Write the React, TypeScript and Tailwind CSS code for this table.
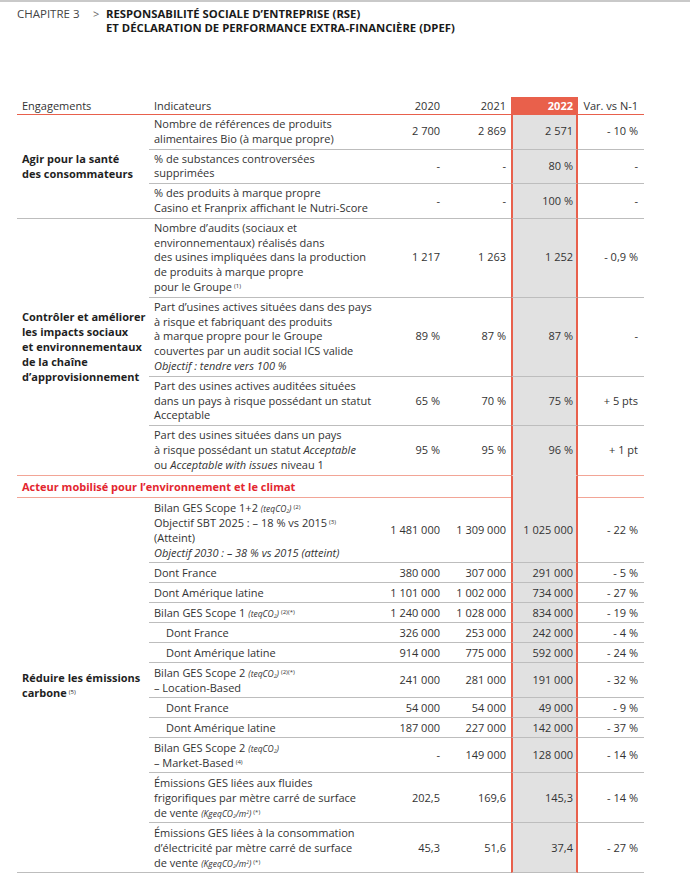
import React from 'react';

type Cell = React.ReactNode;

interface Row {
  lines: Cell[];
  v2020: string;
  v2021: string;
  v2022: string;
  varN: string;
  indent?: boolean;
}

interface Group {
  label: Cell[];
  rows: Row[];
  endBorder: string;
  leading: string;
}

const Sup = ({ children }: { children: React.ReactNode }) => (
  <sup className="ml-[2px] text-[6px] font-normal not-italic leading-none">{children}</sup>
);

const Teq = () => (
  <span className="text-[8.5px] italic leading-none">
    (teqCO<sub className="text-[5px] leading-none">2</sub>)
  </span>
);

const Kg = () => (
  <span className="text-[8.5px] italic leading-none">
    (KgeqCO<sub className="text-[5px] leading-none">2</sub>/m<sup className="text-[5px] leading-none">2</sup>)
  </span>
);

const GROUPS: Group[] = [
  {
    label: ['Agir pour la santé', 'des consommateurs'],
    endBorder: 'border-[#bdbdbd]',
    leading: 'leading-[14.8px]',
    rows: [
      { lines: ['Nombre de références de produits', 'alimentaires Bio (à marque propre)'], v2020: '2 700', v2021: '2 869', v2022: '2 571', varN: '- 10 %' },
      { lines: ['% de substances controversées', 'supprimées'], v2020: '-', v2021: '-', v2022: '80 %', varN: '-' },
      { lines: ['% des produits à marque propre', 'Casino et Franprix affichant le Nutri-Score'], v2020: '-', v2021: '-', v2022: '100 %', varN: '-' },
    ],
  },
  {
    label: ['Contrôler et améliorer', 'les impacts sociaux', 'et environnementaux', 'de la chaîne', 'd’approvisionnement'],
    endBorder: 'border-[#f2a596]',
    leading: 'leading-[14.8px]',
    rows: [
      {
        lines: [
          'Nombre d’audits (sociaux et',
          'environnementaux) réalisés dans',
          'des usines impliquées dans la production',
          'de produits à marque propre',
          <>pour le Groupe<Sup>(1)</Sup></>,
        ],
        v2020: '1 217', v2021: '1 263', v2022: '1 252', varN: '- 0,9 %',
      },
      {
        lines: [
          'Part d’usines actives situées dans des pays',
          'à risque et fabriquant des produits',
          'à marque propre pour le Groupe',
          'couvertes par un audit social ICS valide',
          <i>Objectif : tendre vers 100 %</i>,
        ],
        v2020: '89 %', v2021: '87 %', v2022: '87 %', varN: '-',
      },
      {
        lines: ['Part des usines actives auditées situées', 'dans un pays à risque possédant un statut', 'Acceptable'],
        v2020: '65 %', v2021: '70 %', v2022: '75 %', varN: '+ 5 pts',
      },
      {
        lines: [
          'Part des usines situées dans un pays',
          <>à risque possédant un statut <i>Acceptable</i></>,
          <>ou <i>Acceptable with issues</i> niveau 1</>,
        ],
        v2020: '95 %', v2021: '95 %', v2022: '96 %', varN: '+ 1 pt',
      },
    ],
  },
];

const CARBON: Group = {
  label: [<>Réduire les émissions</>, <>carbone<Sup>(5)</Sup></>],
  endBorder: 'border-[#bdbdbd]',
  leading: 'leading-[15px]',
  rows: [
    {
      lines: [
        <>Bilan GES Scope 1+2 <Teq /><Sup>(2)</Sup></>,
        <>Objectif SBT 2025 : – 18 % vs 2015<Sup>(3)</Sup></>,
        '(Atteint)',
        <i>Objectif 2030 : – 38 % vs 2015 (atteint)</i>,
      ],
      v2020: '1 481 000', v2021: '1 309 000', v2022: '1 025 000', varN: '- 22 %',
    },
    { lines: ['Dont France'], v2020: '380 000', v2021: '307 000', v2022: '291 000', varN: '- 5 %' },
    { lines: ['Dont Amérique latine'], v2020: '1 101 000', v2021: '1 002 000', v2022: '734 000', varN: '- 27 %' },
    { lines: [<>Bilan GES Scope 1 <Teq /><Sup>(2)(*)</Sup></>], v2020: '1 240 000', v2021: '1 028 000', v2022: '834 000', varN: '- 19 %' },
    { lines: ['Dont France'], v2020: '326 000', v2021: '253 000', v2022: '242 000', varN: '- 4 %', indent: true },
    { lines: ['Dont Amérique latine'], v2020: '914 000', v2021: '775 000', v2022: '592 000', varN: '- 24 %', indent: true },
    { lines: [<>Bilan GES Scope 2 <Teq /><Sup>(2)(*)</Sup></>, '– Location-Based'], v2020: '241 000', v2021: '281 000', v2022: '191 000', varN: '- 32 %' },
    { lines: ['Dont France'], v2020: '54 000', v2021: '54 000', v2022: '49 000', varN: '- 9 %', indent: true },
    { lines: ['Dont Amérique latine'], v2020: '187 000', v2021: '227 000', v2022: '142 000', varN: '- 37 %', indent: true },
    { lines: [<>Bilan GES Scope 2 <Teq /></>, <>– Market-Based<Sup>(4)</Sup></>], v2020: '-', v2021: '149 000', v2022: '128 000', varN: '- 14 %' },
    {
      lines: ['Émissions GES liées aux fluides', 'frigorifiques par mètre carré de surface', <>de vente <Kg /><Sup>(*)</Sup></>],
      v2020: '202,5', v2021: '169,6', v2022: '145,3', varN: '- 14 %',
    },
    {
      lines: ['Émissions GES liées à la consommation', 'd’électricité par mètre carré de surface', <>de vente <Kg /><Sup>(*)</Sup></>],
      v2020: '45,3', v2021: '51,6', v2022: '37,4', varN: '- 27 %',
    },
  ],
};

const numCls = 'whitespace-nowrap border-b text-right align-middle';
const hiCls = 'whitespace-nowrap border-x-2 border-x-[#e8604c] bg-[#e1e1e1] text-right align-middle';

function DataRows({ group }: { group: Group }) {
  return (
    <>
      {group.rows.map((row, i) => {
        const last = i === group.rows.length - 1;
        const b = last ? group.endBorder : 'border-[#bdbdbd]';
        return (
          <tr key={i} className={group.leading}>
            {i === 0 && (
              <td
                rowSpan={group.rows.length}
                className={`whitespace-nowrap border-b pl-[5px] align-middle font-bold leading-[15px] text-[#1f1f1f] ${group.endBorder}`}
              >
                {group.label.map((l, k) => (
                  <div key={k}>{l}</div>
                ))}
              </td>
            )}
            <td className={`whitespace-nowrap border-b py-[2px] pr-1 ${row.indent ? 'pl-[17px]' : 'pl-[5px]'} ${b}`}>
              {row.lines.map((l, k) => (
                <div key={k}>{l}</div>
              ))}
            </td>
            <td className={`${numCls} pr-[5px] ${b}`}>{row.v2020}</td>
            <td className={`${numCls} pr-[5px] ${b}`}>{row.v2021}</td>
            <td className={`${hiCls} border-b pr-[3px] ${last && group.endBorder.includes('f2a') ? 'border-b-transparent' : 'border-b-[#bdbdbd]'}`}>
              {row.v2022}
            </td>
            <td className={`${numCls} pr-[6px] ${b}`}>{row.varN}</td>
          </tr>
        );
      })}
    </>
  );
}

export default function App() {
  return (
    <div
      className="min-h-[895px] w-[690px] bg-white text-[#333]"
      style={{ fontFamily: '"Open Sans", "Liberation Sans", sans-serif' }}
    >
      <div className="h-[2px] bg-[#c9c9c9]" />
      <div className="flex pl-[17px] pt-[5px] leading-[14px]">
        <span className="w-[76px] text-[11.5px] text-[#444]">CHAPITRE 3</span>
        <span className="w-[13px] text-[11px] text-[#666]">&gt;</span>
        <div className="text-[11.3px] font-bold text-[#1a1a1a]">
          <div>RESPONSABILITÉ SOCIALE D’ENTREPRISE (RSE)</div>
          <div>ET DÉCLARATION DE PERFORMANCE EXTRA-FINANCIÈRE (DPEF)</div>
        </div>
      </div>

      <table className="ml-[17px] mt-[62px] w-[627px] table-fixed border-separate border-spacing-0 text-[11px] leading-[15px]">
        <colgroup>
          <col className="w-[132px]" />
          <col className="w-[230px]" />
          <col className="w-[66px]" />
          <col className="w-[66px]" />
          <col className="w-[67px]" />
          <col className="w-[66px]" />
        </colgroup>
        <thead>
          <tr className="text-[#333]">
            <th className="border-b border-[#e8604c] py-[1px] pl-[5px] text-left font-normal">Engagements</th>
            <th className="border-b border-[#e8604c] pl-[5px] text-left font-normal">Indicateurs</th>
            <th className="border-b border-[#e8604c] pr-[5px] text-right font-normal">2020</th>
            <th className="border-b border-[#e8604c] pr-[5px] text-right font-normal">2021</th>
            <th className="border-b border-x-2 border-[#e8604c] bg-[#e9604b] pr-[3px] text-right font-bold text-white">2022</th>
            <th className="whitespace-nowrap border-b border-[#e8604c] pr-[6px] text-right font-normal">Var. vs N-1</th>
          </tr>
        </thead>
        <tbody>
          {GROUPS.map((g, i) => (
            <DataRows key={i} group={g} />
          ))}
          <tr>
            <td colSpan={4} className="whitespace-nowrap border-b border-[#f2a596] py-[3px] pl-[5px] font-bold text-[#e3262f]">
              Acteur mobilisé pour l’environnement et le climat
            </td>
            <td className={hiCls} />
            <td className="border-b border-[#f2a596]" />
          </tr>
          <DataRows group={CARBON} />
        </tbody>
      </table>
    </div>
  );
}
